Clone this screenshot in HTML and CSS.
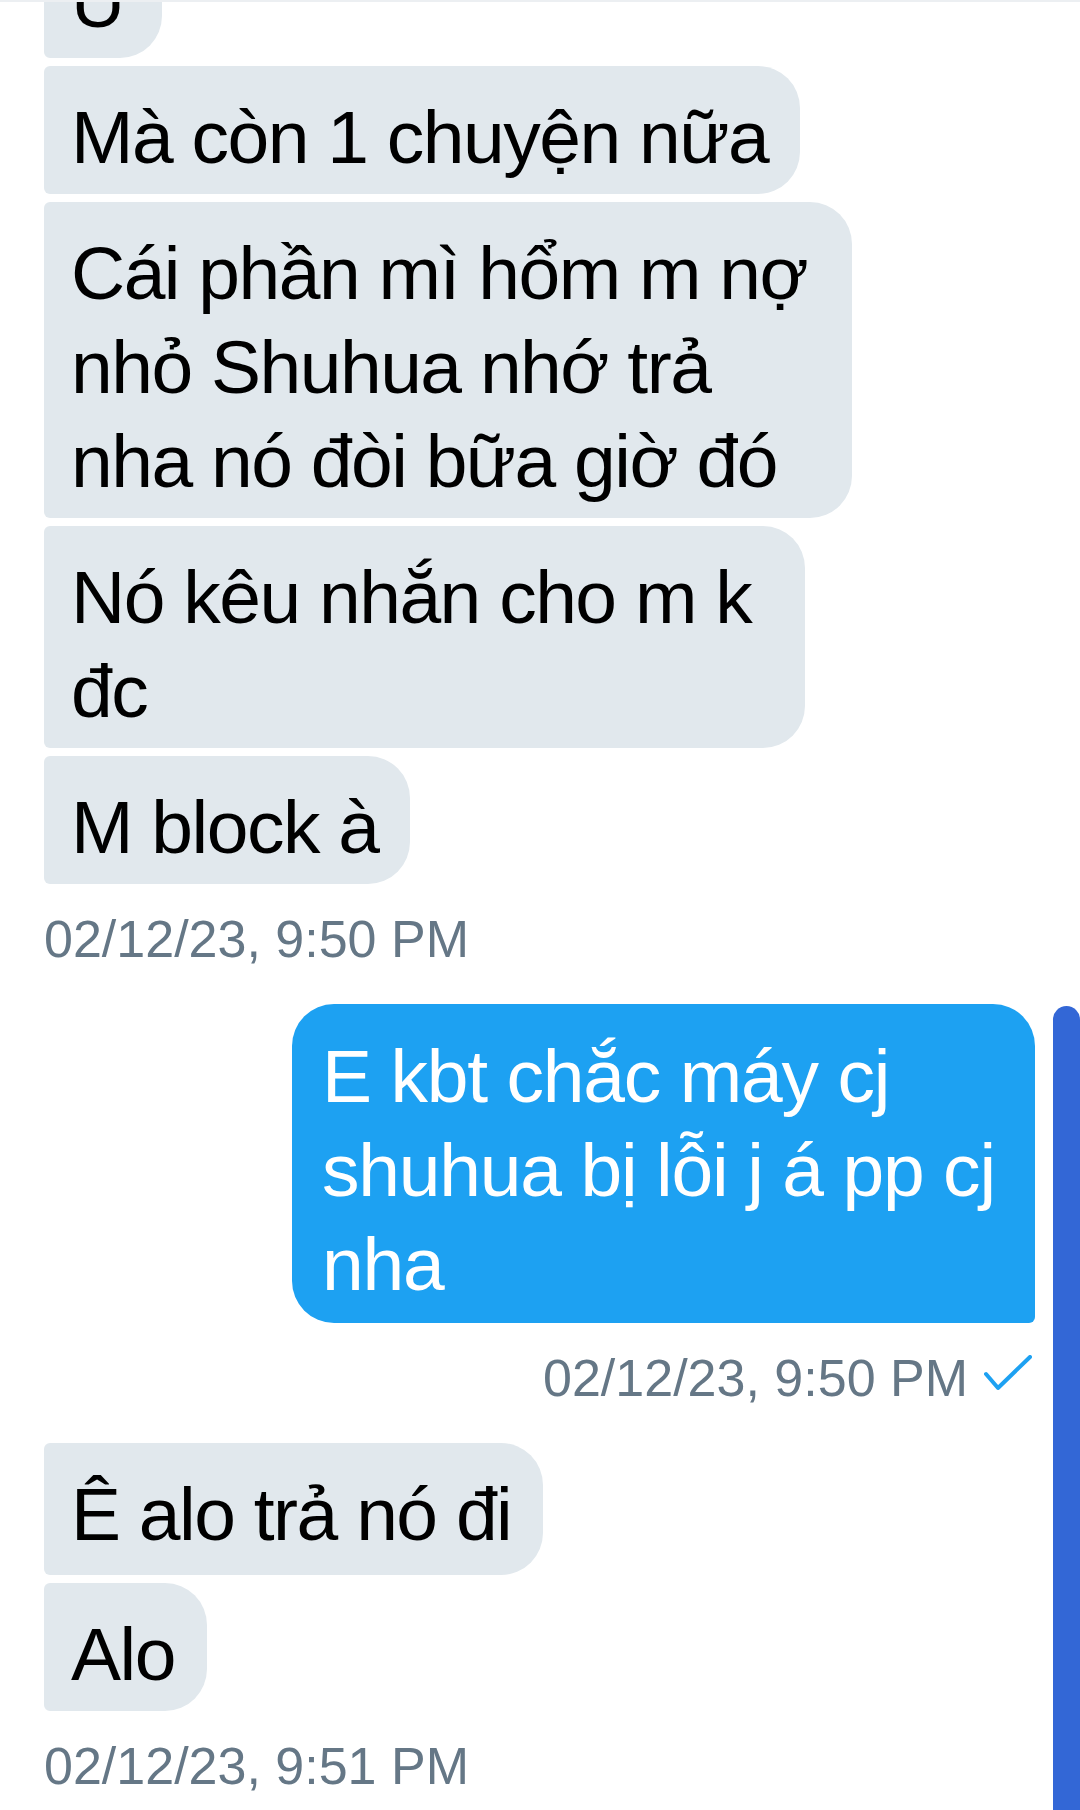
FILE: index.html
```html
<!DOCTYPE html>
<html lang="vi">
<head>
<meta charset="utf-8">
<title>Chat</title>
<link rel="stylesheet" href="styles.css">
</head>
<body>
<div class="chat">
  <div class="group">
    <div class="bubble in w-first">Ừ</div>
    <div class="bubble in">Mà còn 1 chuyện nữa</div>
    <div class="bubble in w-808">Cái phần mì hổm m nợ<br>nhỏ Shuhua nhớ trả<br>nha nó đòi bữa giờ đó</div>
    <div class="bubble in w-761">Nó kêu nhắn cho m k<br>đc</div>
    <div class="bubble in">M block à</div>
  </div>
  <div class="stamp">02/12/23, 9:50 PM</div>

  <div class="group out-group">
    <div class="bubble out w-743">E kbt chắc máy cj<br>shuhua bị lỗi j á pp cj<br>nha</div>
  </div>
  <div class="stamp stamp-out">
    <span>02/12/23, 9:50 PM</span>
    <svg class="check" width="48" height="36" viewBox="0 0 48 36" aria-hidden="true">
      <path d="M2 19 L14 33 L46 2" fill="none" stroke="#1da1f2" stroke-width="4" stroke-linecap="round" stroke-linejoin="round"/>
    </svg>
  </div>

  <div class="group">
    <div class="bubble in tall">Ê alo trả nó đi</div>
    <div class="bubble in">Alo</div>
  </div>
  <div class="stamp">02/12/23, 9:51 PM</div>
</div>
<div class="scroll-thumb"></div>
</body>
</html>
```

FILE: styles.css
```css
html, body {
  margin: 0;
  padding: 0;
  background: #ffffff;
  overflow: hidden;
}

body {
  position: relative;
  height: 1808px;
  border-top: 2px solid #eceff2;
  font-family: "Liberation Sans", Arial, "Noto Sans", sans-serif;
}

.chat {
  display: flex;
  flex-direction: column;
  padding: 0 45px 0 44px;
  margin-top: -72px;
}

.group {
  display: flex;
  flex-direction: column;
  align-items: flex-start;
  gap: 8px;
}

.out-group {
  align-items: flex-end;
  margin-top: 35px;
}

.stamp + .group {
  margin-top: 35px;
}

.bubble {
  box-sizing: border-box;
  font-size: 75px;
  line-height: 94px;
  letter-spacing: -1.2px;
  white-space: nowrap;
  padding: 24px 32px 10px 27px;
}

.bubble.in {
  background: #e1e8ed;
  color: #000000;
  letter-spacing: -1.5px;
  border-radius: 6px 42px 42px 6px;
}

.bubble.out {
  background: #1da1f2;
  color: #ffffff;
  border-radius: 42px 42px 6px 42px;
  padding: 25px 30px 12px 30px;
}

.bubble.tall {
  padding-bottom: 14px;
}

.w-first { width: 118px; }
.w-808 { width: 808px; }
.w-761 { width: 761px; }
.w-743 { width: 743px; }

.stamp {
  margin-top: 25px;
  font-size: 52px;
  line-height: 60px;
  color: #657786;
  white-space: nowrap;
}

.stamp-out {
  display: flex;
  justify-content: flex-end;
  align-items: center;
  gap: 16px;
  padding-right: 3px;
}

.check {
  display: block;
  margin-top: -10px;
}

.scroll-thumb {
  position: absolute;
  right: 0;
  top: 1004px;
  width: 27px;
  bottom: 0;
  background: #3367d6;
  border-radius: 14px 14px 0 0;
}
```
